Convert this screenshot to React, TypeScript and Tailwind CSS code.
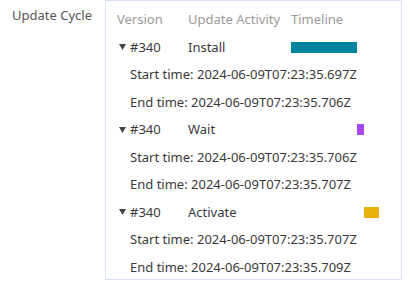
import type { ReactNode } from 'react';

interface Activity {
  version: string;
  name: string;
  start: string;
  end: string;
  color: string;
}

const activities: Activity[] = [
  { version: '#340', name: 'Install', start: '2024-06-09T07:23:35.697Z', end: '2024-06-09T07:23:35.706Z', color: 'bg-[#00839d]' },
  { version: '#340', name: 'Wait', start: '2024-06-09T07:23:35.706Z', end: '2024-06-09T07:23:35.707Z', color: 'bg-[#a546ef]' },
  { version: '#340', name: 'Activate', start: '2024-06-09T07:23:35.707Z', end: '2024-06-09T07:23:35.709Z', color: 'bg-[#e9b10b]' },
];

const TIMELINE_WIDTH = 88;

const ms = (iso: string) => new Date(iso).getTime();

function Row({ children }: { children: ReactNode }) {
  return <div className="grid grid-cols-[71px_103px_1fr] items-center h-[27.5px]">{children}</div>;
}

export default function App() {
  const t0 = ms(activities[0].start);
  const t1 = ms(activities[activities.length - 1].end);
  const scale = TIMELINE_WIDTH / (t1 - t0);

  return (
    <div className="flex w-[408px] h-[284px] bg-white text-[13px] leading-[19.5px]" style={{ fontFamily: '"Noto Sans", sans-serif' }}>
      <div className="w-[105px] shrink-0 pl-3 pt-[6px] text-[#555]">Update Cycle</div>
      <div className="w-[297px] h-[280px] border border-[#d8e2f2] pl-[11px] pt-[5px] text-[#3a3a3a]">
        <Row>
          <span className="text-[#9a9a9a]">Version</span>
          <span className="text-[#9a9a9a]">Update Activity</span>
          <span className="text-[#9a9a9a]">Timeline</span>
        </Row>
        {activities.map((a, i) => (
          <div key={i}>
            <Row>
              <span className="flex items-center pl-[2px]">
                <svg width="7" height="6" viewBox="0 0 7 6" className="mr-[4px]">
                  <path d="M0 0h7L3.5 6z" fill="#444" />
                </svg>
                {a.version}
              </span>
              <span>{a.name}</span>
              <span className="flex items-center">
                <span
                  className={`block h-[11px] ${a.color}`}
                  style={{ marginLeft: (ms(a.start) - t0) * scale, width: (ms(a.end) - ms(a.start)) * scale }}
                />
              </span>
            </Row>
            <div className="h-[27.5px] flex items-center pl-[13px]">Start time: {a.start}</div>
            <div className="h-[27.5px] flex items-center pl-[13px]">End time: {a.end}</div>
          </div>
        ))}
      </div>
    </div>
  );
}
